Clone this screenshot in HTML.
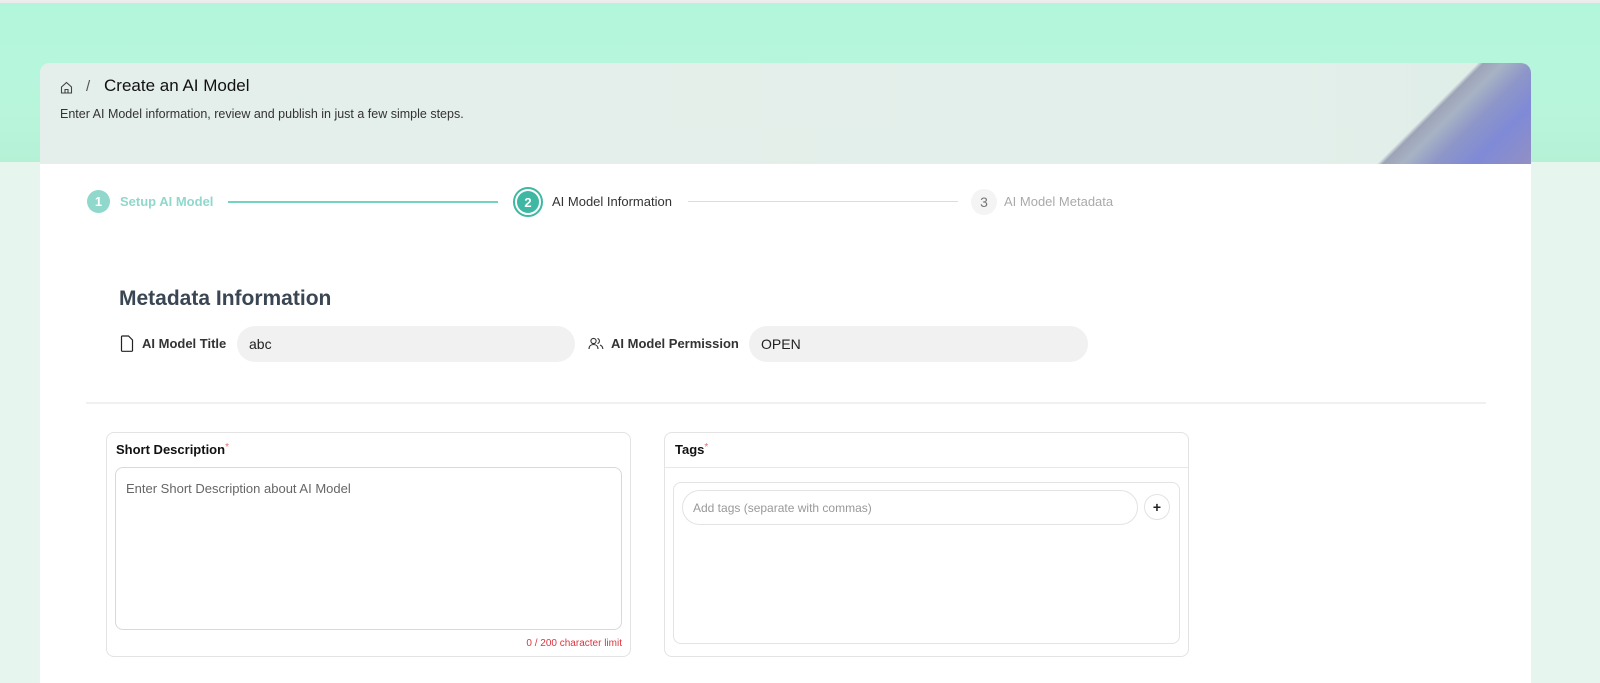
<!DOCTYPE html>
<html><head><meta charset="utf-8"><style>
*{box-sizing:border-box;margin:0;padding:0}
body{width:1600px;height:677px;overflow:hidden;font-family:"Liberation Sans",Arial,sans-serif;background:#e6f6ee;position:relative}
.top{position:absolute;left:0;top:0;width:1600px;height:162px;background:linear-gradient(180deg,#b2f6dc 0%,#b8f6dc 60%,#b6f1d6 100%);border-top:3px solid #ececec}
.card{position:absolute;left:40px;top:63px;width:1491px;height:620px;background:#fff;border-radius:10px 10px 0 0;overflow:hidden}
.hdr{height:101px;background:linear-gradient(90deg,#e4eeea 0%,#e3efea 80%,#dfeee8 100%);position:relative;border-bottom:1px solid #ececec}
.deco{position:absolute;right:0;top:0;width:190px;height:101px;background:linear-gradient(135deg,transparent 47%,#9ea3b8 49%,#a7b3c4 56%,#8e97c8 66%,#7f8ad6 80%,#9290c4 100%)}
.abs{position:absolute;white-space:nowrap}
.circ{position:absolute;border-radius:50%;display:flex;align-items:center;justify-content:center}
.inp{position:absolute;background:#f1f1f1;border-radius:18px;font-size:14px;color:#222;padding-left:12px;display:flex;align-items:center}
.box{position:absolute;border:1px solid #e3e3e3;border-radius:8px;background:#fff}
</style></head><body>
<div class="top"></div>
<div class="card">
 <div class="hdr">
  <div class="deco"></div>
  <svg class="abs" style="left:20px;top:18px" width="13" height="13" viewBox="0 0 13 13" fill="none" stroke="#444" stroke-width="1.1"><path d="M1.5 6L6.5 1.5 11.5 6V12H1.5Z"/><path d="M5 12V8.5h3V12"/></svg>
  <div class="abs" style="left:46px;top:15px;font-size:15px;color:#555">/</div>
  <div class="abs" style="left:64px;top:13px;font-size:17px;color:#111">Create an AI Model</div>
  <div class="abs" style="left:20px;top:44px;font-size:12.5px;color:#333">Enter AI Model information, review and publish in just a few simple steps.</div>
 </div>
 <div class="circ" style="left:47px;top:127px;width:23px;height:23px;background:#8fd8cb;color:#fff;font-size:13px;font-weight:bold">1</div>
 <div class="abs" style="left:80px;top:131px;font-size:13px;font-weight:bold;color:#8fd8cb">Setup AI Model</div>
 <div class="abs" style="left:188px;top:138px;width:270px;height:2px;background:#74d2c2"></div>
 <div class="circ" style="left:473px;top:124px;width:30px;height:30px;border:2px solid #3eb8a3;background:#fff"><div class="circ" style="position:static;width:22px;height:22px;background:#3eb8a3;color:#fff;font-size:13px;font-weight:bold">2</div></div>
 <div class="abs" style="left:512px;top:131px;font-size:13px;color:#333">AI Model Information</div>
 <div class="abs" style="left:648px;top:138px;width:270px;height:1px;background:#dcdcdc"></div>
 <div class="circ" style="left:931px;top:126px;width:26px;height:26px;background:#f4f4f4;color:#777;font-size:14px">3</div>
 <div class="abs" style="left:964px;top:131px;font-size:13px;color:#aaa">AI Model Metadata</div>
 <div class="abs" style="left:79px;top:224px;font-size:21px;font-weight:bold;color:#3a4653">Metadata Information</div>
 <svg class="abs" style="left:80px;top:272px" width="14" height="17" viewBox="0 0 14 17" fill="none" stroke="#222" stroke-width="1.2"><path d="M2 1h6.5L12.5 5v10.5a.8.8 0 0 1-.8.8H2.3a.8.8 0 0 1-.8-.8V1.8A.8.8 0 0 1 2 1z"/></svg>
 <div class="abs" style="left:102px;top:273px;font-size:13px;font-weight:bold;color:#333">AI Model Title</div>
 <div class="inp" style="left:197px;top:263px;width:338px;height:36px">abc</div>
 <svg class="abs" style="left:548px;top:274px" width="16" height="13" viewBox="0 0 16 13" fill="none" stroke="#333" stroke-width="1.1"><circle cx="5.5" cy="4" r="2.6"/><path d="M1 12c0-3 2-4.5 4.5-4.5S10 9 10 12"/><path d="M9.5 1.5a2.6 2.6 0 0 1 0 5M12 8c1.8.7 2.8 2 2.8 4"/></svg>
 <div class="abs" style="left:571px;top:273px;font-size:13px;font-weight:bold;color:#333">AI Model Permission</div>
 <div class="inp" style="left:709px;top:263px;width:339px;height:36px">OPEN</div>
 <div class="abs" style="left:46px;top:339px;width:1400px;height:2px;background:#f0f0f0"></div>
 <div class="box" style="left:66px;top:369px;width:525px;height:225px">
  <div class="abs" style="left:9px;top:9px;font-size:13px;font-weight:bold;color:#111">Short Description<span style="color:#e07070;font-weight:normal;font-size:10px;vertical-align:top">*</span></div>
  <div class="box" style="left:8px;top:34px;width:507px;height:163px;border-color:#d9d9d9"><div class="abs" style="left:10px;top:13px;font-size:13px;color:#666">Enter Short Description about AI Model</div></div>
  <div class="abs" style="right:8px;top:205px;font-size:10px;color:#d9363e">0 / 200 character limit</div>
 </div>
 <div class="box" style="left:624px;top:369px;width:525px;height:225px">
  <div class="abs" style="left:10px;top:9px;font-size:13px;font-weight:bold;color:#111">Tags<span style="color:#e07070;font-weight:normal;font-size:10px;vertical-align:top">*</span></div>
  <div class="abs" style="left:0;top:34px;width:523px;height:1px;background:#e8e8e8"></div>
  <div class="box" style="left:8px;top:49px;width:507px;height:162px">
   <div class="abs" style="left:8px;top:7px;width:456px;height:35px;border:1px solid #e3e3e3;border-radius:18px;font-size:12px;color:#999;padding:10px 10px">Add tags (separate with commas)</div>
   <div class="circ" style="left:470px;top:11px;width:26px;height:26px;border:1px solid #e3e3e3;font-size:14px;font-weight:bold;color:#222">+</div>
  </div>
 </div>
</div>
</body></html>
